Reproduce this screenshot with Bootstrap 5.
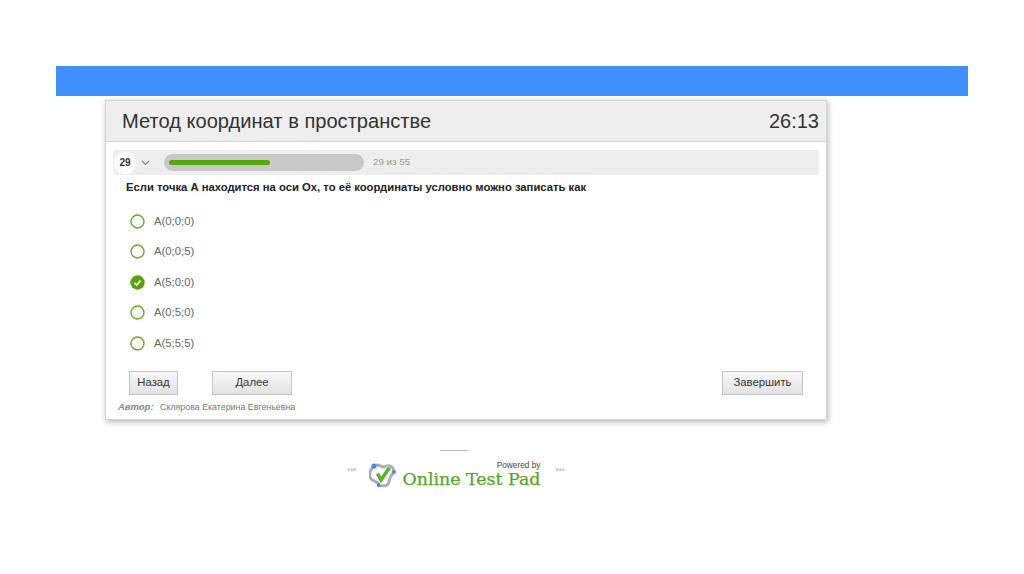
<!DOCTYPE html>
<html lang="en">
<head>
  <meta charset="UTF-8">
  <meta name="viewport" content="width=device-width, initial-scale=1.0">
  <title>Метод координат в пространстве</title>
  <link rel="stylesheet" href="https://cdn.jsdelivr.net/npm/bootstrap@5.3.0/dist/css/bootstrap.min.css">
  <style>
    body { font-family: "Liberation Sans", Arial, sans-serif; background: #fff; color: #333; height: 574px; overflow: hidden; }
    .top-strip { background: #3e8efb; height: 30px; width: 912px; margin: 66px 0 0 56px; }
    .test-box { width: 722px; height: 320px; margin: 4px 0 0 105px; background: #fff; border: 1px solid #d6d6d6; box-shadow: 1px 2px 6px rgba(0,0,0,.3); }
    .test-head { height: 41px; background: #eee; border-bottom: 1px solid #d4d4d4; padding: 0 7px 0 16px; }
    .test-title { font-size: 20.1px; color: #333; }
    .test-timer { font-size: 20px; color: #333; }
    .progress-row { height: 25px; margin: 8px 7px 0 7px; background: #eee; }
    .num-circle { width: 22px; height: 22px; border-radius: 50%; background: #fff; font-size: 10px; font-weight: 700; color: #333; margin-left: 1px; }
    .chev { margin: 0 14px 0 5px; }
    .track { width: 200px; height: 17px; border-radius: 9px; background: #c8c8c8; padding: 0 5px; }
    .track-fill { height: 5px; border-radius: 3px; background: #56a80a; }
    .count-text { font-size: 9.8px; font-weight: 400; color: #999; margin-left: 9px; }
    .question { font-size: 11.25px; font-weight: 700; color: #222; margin: 6px 0 0 20px; line-height: 13px; }
    .answers { margin: 12px 0 0 24px; }
    .answer-line { height: 30.5px; gap: 9px; font-size: 11.3px; color: #666; }
    .answer-ring { width: 15px; height: 15px; flex: none; }
    .btn-row { margin: 12px 23px 0 23px; }
    .grey-btn { height: 24px; padding: 0; font-size: 11.3px; color: #333; border: 1px solid #c4c4c4; border-radius: 0; background: linear-gradient(#f8f8f8, #e2e2e2); }
    .grey-btn:hover { color: #333; border-color: #c4c4c4; }
    .back-btn { width: 49px; }
    .next-btn { width: 80px; margin-left: 34px; }
    .finish-btn { width: 81px; }
    .author-row { margin: 3px 0 0 12px; line-height: 13px; }
    .author-label { font-size: 9.5px; font-weight: 700; font-style: italic; color: #888; margin-right: 2px; }
    .author-name { font-size: 8.85px; color: #777; }
    .logo-dash { width: 28px; height: 1px; background: #bdbdbd; margin: 30px 0 0 440px; }
    .logo-row { margin: 10px 0 0 347px; width: 218px; }
    .logo-dots { font-size: 9px; line-height: 9px; color: #c5c5c5; font-weight: 700; margin-top: -9px; }
    .logo-icon { margin-left: 13px; flex: none; }
    .logo-words { margin-left: 6px; width: 138px; text-align: right; }
    .logo-powered { font-size: 8.3px; line-height: 8px; color: #444; }
    .logo-name { font-family: "DejaVu Serif", "Liberation Serif", serif; font-size: 17.4px; line-height: 19px; color: #57a51c; white-space: nowrap; margin-top: 1px; -webkit-text-stroke: .25px #57a51c; }
  </style>
</head>
<body>
  <div class="top-strip"></div>

  <div class="test-box">
    <div class="test-head d-flex align-items-center justify-content-between">
      <span class="test-title">Метод координат в пространстве</span>
      <span class="test-timer">26:13</span>
    </div>

    <div class="progress-row d-flex align-items-center">
      <div class="num-circle d-flex align-items-center justify-content-center">29</div>
      <svg class="chev" width="9" height="6" viewBox="0 0 9 6"><path d="M1 1l3.5 3.5L8 1" fill="none" stroke="#888" stroke-width="1.2"/></svg>
      <div class="track d-flex align-items-center"><div class="track-fill" style="width: 53%"></div></div>
      <span class="count-text">29 из 55</span>
    </div>

    <div class="question">Если точка А находится на оси Ох, то её координаты условно можно записать как</div>

    <!-- answers -->
    <div class="answers">
      <div class="answer-line d-flex align-items-center">
        <svg class="answer-ring" viewBox="0 0 15 15"><circle cx="7.5" cy="7.5" r="6.5" fill="#fff" stroke="#6aa91f" stroke-width="1.4"/></svg>
        <span>A(0;0;0)</span>
      </div>
      <div class="answer-line d-flex align-items-center">
        <svg class="answer-ring" viewBox="0 0 15 15"><circle cx="7.5" cy="7.5" r="6.5" fill="#fff" stroke="#6aa91f" stroke-width="1.4"/></svg>
        <span>A(0;0;5)</span>
      </div>
      <div class="answer-line d-flex align-items-center">
        <svg class="answer-ring" viewBox="0 0 15 15"><circle cx="7.5" cy="7.5" r="7.2" fill="#56a30c"/><path d="M4.3 7.8l2.3 2.2 4-4.3" fill="none" stroke="#fff" stroke-width="1.8"/></svg>
        <span>A(5;0;0)</span>
      </div>
      <div class="answer-line d-flex align-items-center">
        <svg class="answer-ring" viewBox="0 0 15 15"><circle cx="7.5" cy="7.5" r="6.5" fill="#fff" stroke="#6aa91f" stroke-width="1.4"/></svg>
        <span>A(0;5;0)</span>
      </div>
      <div class="answer-line d-flex align-items-center">
        <svg class="answer-ring" viewBox="0 0 15 15"><circle cx="7.5" cy="7.5" r="6.5" fill="#fff" stroke="#6aa91f" stroke-width="1.4"/></svg>
        <span>A(5;5;5)</span>
      </div>
    </div>

    <div class="btn-row d-flex">
      <button type="button" class="btn grey-btn back-btn">Назад</button>
      <button type="button" class="btn grey-btn next-btn">Далее</button>
      <button type="button" class="btn grey-btn finish-btn ms-auto">Завершить</button>
    </div>

    <div class="author-row">
      <span class="author-label">Автор:</span>
      <span class="author-name">Склярова Екатерина Евгеньевна</span>
    </div>
  </div>

  <div class="logo-dash"></div>
  <div class="logo-row d-flex align-items-center">
    <span class="logo-dots">•••</span>
    <svg class="logo-icon" width="27" height="26" viewBox="0 0 27 26">
      <path d="M5 4c4-3 7 1 9 1s6-3 9 0 1 7-1 9-1 7-4 9-7 0-9-2-7-2-8-6 1-8 4-11z" fill="#fff" stroke="#a9aeb4" stroke-width="3"/>
      <circle cx="13.5" cy="13" r="5" fill="#fff"/>
      <circle cx="5" cy="4" r="2.6" fill="#3f8fe0"/>
      <circle cx="25" cy="10" r="2" fill="#3f8fe0"/>
      <circle cx="10" cy="23" r="2.2" fill="#3f8fe0"/>
      <path d="M8.5 11.5l3.5 6.5 8.5-12.5" fill="none" stroke="#fff" stroke-width="5.5"/>
      <path d="M8.5 11.5l3.5 6.5 8.5-12.5" fill="none" stroke="#5eb32a" stroke-width="3.6"/>
    </svg>
    <div class="logo-words">
      <div class="logo-powered">Powered by</div>
      <div class="logo-name">Online Test Pad</div>
    </div>
    <span class="logo-dots ms-auto">•••</span>
  </div>

  <script src="https://cdn.jsdelivr.net/npm/bootstrap@5.3.0/dist/js/bootstrap.bundle.min.js"></script>
</body>
</html>
